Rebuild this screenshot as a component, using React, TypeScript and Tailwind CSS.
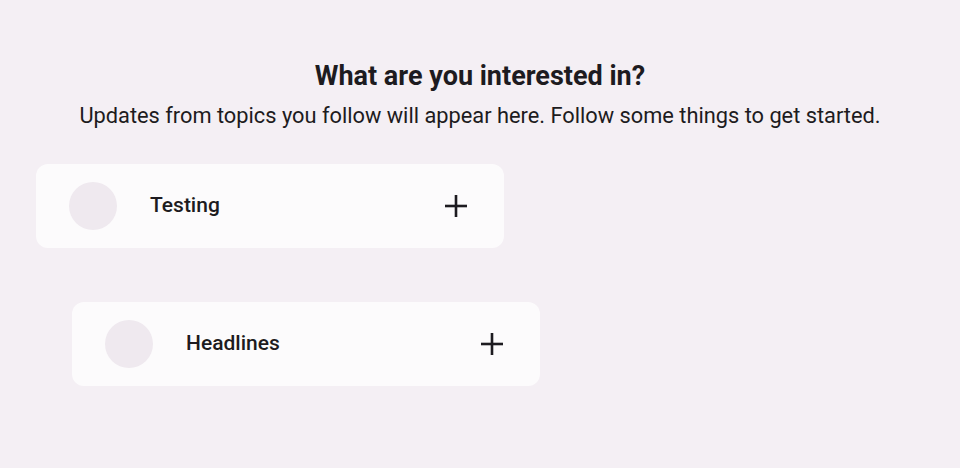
const topics = [
    { name: "Testing", indent: "ml-[36px]" },
    { name: "Headlines", indent: "ml-[72px]" },
]

function PlusIcon() {
    return (
        <svg width="22" height="22" viewBox="0 0 22 22" fill="#1d1b20">
            <rect x="9.7" y="0" width="2.6" height="22" />
            <rect x="0" y="9.7" width="22" height="2.6" />
        </svg>
    )
}

function TopicCard({ name, indent }: { name: string; indent: string }) {
    return (
        <div className={`${indent} w-[468px] h-[84px] rounded-xl bg-[#fcfbfc] flex items-center pl-[33px] pr-[37px]`}>
            <div className="w-12 h-12 rounded-full bg-[#efe9ef] shrink-0" />
            <span className="ml-[33px] flex-1 text-[21px] font-medium text-[#1d1b20]">{name}</span>
            <PlusIcon />
        </div>
    )
}

export default function App() {
    return (
        <div className="w-[960px] h-[468px] bg-[#f4eff4] font-['Roboto',sans-serif] text-[#1d1b20] overflow-hidden">
            <div className="pt-[60px] flex flex-col items-center">
                <h1 className="text-[27px] font-bold leading-[32px]">What are you interested in?</h1>
                <p className="mt-[10px] text-[21.8px] leading-[28px]">
                    Updates from topics you follow will appear here. Follow some things to get started.
                </p>
            </div>
            <div className="mt-[34px] flex flex-col gap-[54px]">
                {topics.map((t) => (
                    <TopicCard key={t.name} name={t.name} indent={t.indent} />
                ))}
            </div>
        </div>
    )
}
